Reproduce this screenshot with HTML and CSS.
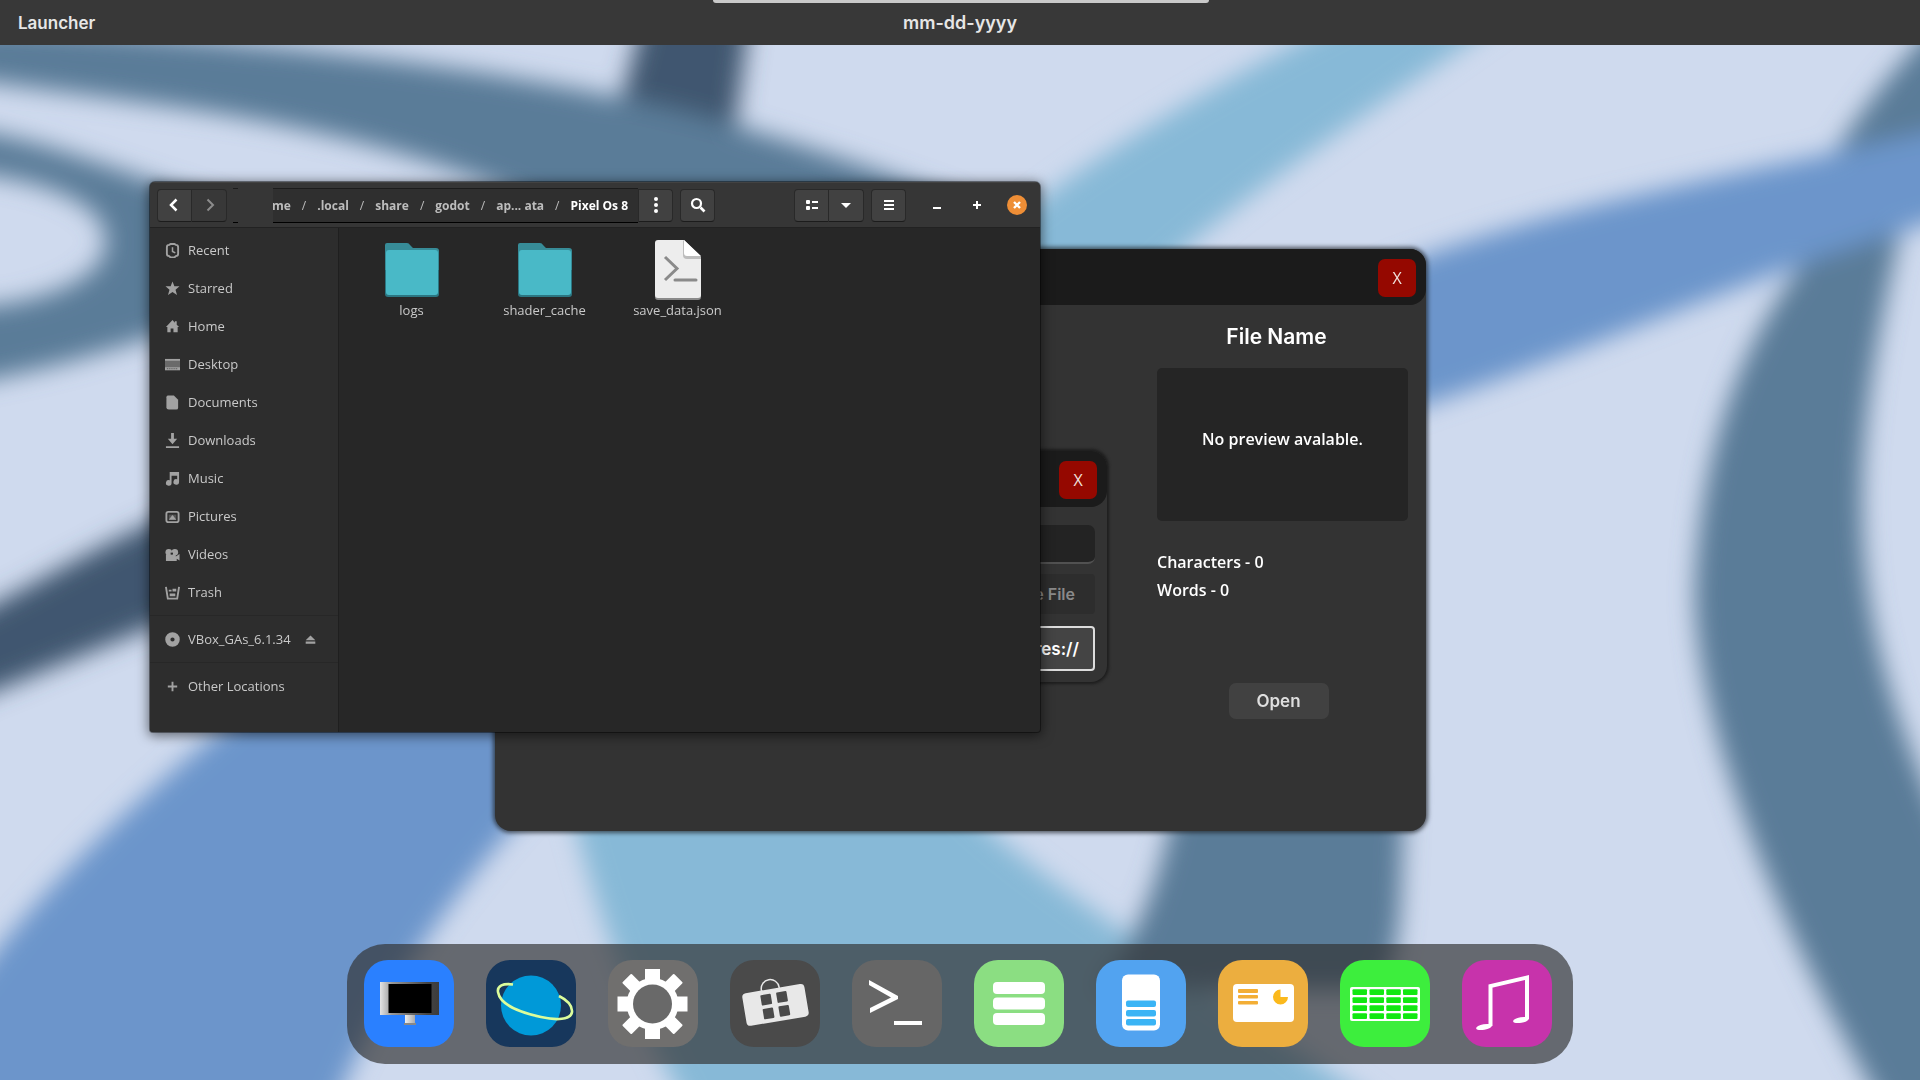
FILE: index.html
```html
<!DOCTYPE html>
<html lang="en">
<head>
    <meta charset="UTF-8">
    <title>Pixel Os 8</title>
    <link rel="stylesheet" href="styles.css">
</head>
<body>
<svg class="wallpaper" viewBox="0 0 1920 1080" preserveAspectRatio="xMidYMid slice" aria-hidden="true">
    <defs>
        <filter id="soft" x="-10%" y="-10%" width="120%" height="120%"><feGaussianBlur stdDeviation="12"/></filter>
    </defs>
    <rect width="1920" height="1080" fill="#cfdaee"/>
    <g filter="url(#soft)">
        <path fill="#3f566f" d="M648 0H752L732 150H608Z"/>
        <path fill="#3f566f" d="M-40 622C60 572 110 535 250 480V590C140 630 60 665 -40 705Z"/>
        <path fill="#5a7b98" d="M-40 25C200 35 420 60 560 86C720 115 820 150 960 200V320H700C600 220 480 160 240 117C150 102 60 92 -40 78Z"/>
        <path fill="#5a7b98" d="M-40 128C50 140 110 170 230 205V310C140 342 60 368 -40 385V308C40 305 106 280 106 241C106 205 50 180 -40 172Z"/>
        <path fill="#87b9d7" d="M1380 0H1530C1390 100 1260 180 1160 270L1000 420H850C900 280 1080 150 1380 0Z"/>
        <path fill="#87b9d7" d="M560 760H920C1000 860 1170 960 1400 1120H695C630 1010 590 900 560 760Z"/>
        <path fill="#5a7b98" d="M1960 0C1900 60 1860 110 1830 160L1960 140Z"/>
        <path fill="#5a7b98" d="M1908 200C1840 480 1840 620 1960 860V1120H1890C1780 930 1695 730 1695 590C1700 460 1735 330 1840 220Z"/>
        <path fill="#6c95cb" d="M1380 272C1550 205 1740 175 1960 125V215C1780 260 1600 350 1380 420Z"/>
        <path fill="#6c95cb" d="M270 690H640C490 840 380 980 330 1120H-40V1000C30 900 120 810 270 690Z"/>
        <path fill="#5a7b98" d="M1180 780H1408C1396 870 1410 940 1380 990H1095C1145 930 1162 870 1180 780Z"/>
    </g>
</svg>

<header class="topbar">
    <span class="launcher">Launcher</span>
    <span class="date">mm-dd-yyyy</span>
    <span class="handle"></span>
</header>

<main class="desktop">
    <!-- file picker app -->
    <section class="win app">
        <div class="win-title"><button class="win-close">X</button></div>
        <div class="app-body">
            <aside class="details">
                <h2>File Name</h2>
                <div class="preview">No preview avalable.</div>
                <p>Characters - 0</p>
                <p>Words - 0</p>
                <div class="details-foot"><button class="open">Open</button></div>
            </aside>
        </div>
    </section>

    <!-- create dialog -->
    <section class="win dialog">
        <div class="win-title"><button class="win-close">X</button></div>
        <div class="dialog-body">
            <input class="dialog-input" type="text" aria-label="File name">
            <button class="dialog-create" disabled>Create File</button>
            <button class="dialog-root">res://</button>
        </div>
    </section>

    <!-- file manager -->
    <section class="files">
        <div class="files-head">
            <div class="group">
                <button aria-label="Back"><svg width="16" height="16" viewBox="0 0 16 16"><path d="M9.500 2.500L4 8l5.500 5.500" fill="none" stroke="#fff" stroke-width="2.500"/></svg></button>
                <button class="off" aria-label="Forward"><svg width="16" height="16" viewBox="0 0 16 16"><path d="M6.500 2.500L12 8l-5.500 5.500" fill="none" stroke="#8c8c8c" stroke-width="2"/></svg></button>
            </div>
            <div class="path-stub"></div>
            <nav class="path">
                <a href="#">Home</a><i>/</i><a href="#">.local</a><i>/</i><a href="#">share</a><i>/</i><a href="#">godot</a><i>/</i><a href="#">ap... ata</a><i>/</i><a class="current" href="#">Pixel Os 8</a>
            </nav>
            <button class="path-menu" aria-label="Path menu"><svg width="16" height="18" viewBox="0 0 16 18" fill="#fff"><circle cx="8" cy="3" r="2"/><circle cx="8" cy="9" r="2"/><circle cx="8" cy="15" r="2"/></svg></button>
            <button class="search" aria-label="Search"><svg width="16" height="16" viewBox="0 0 16 16" fill="none" stroke="#fff"><circle cx="6.500" cy="6.500" r="4.500" stroke-width="2.200"/><path d="M10.500 10.500L14.500 14.500" stroke-width="2.600"/></svg></button>
            <div class="group view">
                <button aria-label="List view"><svg width="16" height="16" viewBox="0 0 16 16" fill="#fff"><rect x="2" y="3" width="4" height="4" rx="1"/><rect x="2" y="9" width="4" height="4" rx="1"/><path d="M8 4h6v2H8zM8 10h6v2H8z"/></svg></button>
                <button aria-label="View options"><svg width="16" height="16" viewBox="0 0 16 16" fill="#fff"><path d="M3 6h10L8 11z"/></svg></button>
            </div>
            <button aria-label="Menu"><svg width="16" height="16" viewBox="0 0 16 16" fill="#fff"><path d="M3 3h10v2H3zM3 7h10v2H3zM3 11h10v2H3z"/></svg></button>
            <div class="win-controls">
                <button aria-label="Minimize"><svg width="20" height="20" viewBox="0 0 20 20" fill="#fff"><path d="M6 12h8v2H6z"/></svg></button>
                <button aria-label="Maximize"><svg width="20" height="20" viewBox="0 0 20 20" fill="#fff"><path d="M9 6h2v3h3v2h-3v3H9v-3H6V9h3z"/></svg></button>
                <button aria-label="Close"><svg width="20" height="20" viewBox="0 0 20 20"><circle cx="10" cy="10" r="10" fill="#ee8e36"/><path d="M7 7l6 6M13 7l-6 6" stroke="#fff" stroke-width="2.400"/></svg></button>
            </div>
        </div>
        <div class="files-main">
            <nav class="sidebar">
                <a href="#"><svg viewBox="0 0 16 16"><path d="M4.500 2L6 1h4l1.500 1Q14 2 14 4.500v7Q14 14 11.500 14L10 15.500H6L4.500 14Q2 14 2 11.500v-7Q2 2 4.500 2z" fill="none" stroke="#a2a2a2" stroke-width="2"/><path d="M8 4.500V9l3 1.500" fill="none" stroke="#a2a2a2" stroke-width="1.600"/></svg>Recent</a>
                <a href="#"><svg viewBox="0 0 16 16"><path d="M8 .5l2 5.200h5.500L11.200 9.200l1.600 5.800L8 11.700 3.200 15l1.600-5.800L.5 5.700H6z"/></svg>Starred</a>
                <a href="#"><svg viewBox="0 0 16 16"><path d="M8 1L1 8.500h1.500V14H6v-4h3v4h4.500V8.500H15L12.500 6V2.500h-2V4z"/></svg>Home</a>
                <a href="#"><svg viewBox="0 0 16 16"><path d="M0 2h16v12H0z" fill="#6a6a6a"/><path d="M0 2h16v2H0zM0 11h16v3H0z"/><path d="M2 12.500h12" stroke="#444" stroke-width="1" stroke-dasharray="1 1"/></svg>Desktop</a>
                <a href="#"><svg viewBox="0 0 16 16"><path d="M3 .5h6.500L14 5v8.500Q14 15.500 12 15.500H4Q1.500 15.500 1.500 13V2.500Q1.500.5 3 .5z"/></svg>Documents</a>
                <a href="#"><svg viewBox="0 0 16 16"><path d="M6.500 0h3v6H13l-5 6-5-6h3.500zM1 14h14v2H1z"/></svg>Downloads</a>
                <a href="#"><svg viewBox="0 0 16 16"><path d="M5 1h10v10.500a3 3 0 1 1-2-2.700V5H7v7.500a3 3 0 1 1-2-2.700z"/></svg>Music</a>
                <a href="#"><svg viewBox="0 0 16 16"><rect x="1.500" y="3" width="13" height="11" rx="2" fill="none" stroke="#a2a2a2" stroke-width="2"/><path d="M4 6h8v5.500H4z" fill="#555"/><path d="M4 11.500L8 6.500l4 5z"/></svg>Pictures</a>
                <a href="#"><svg viewBox="0 0 16 16"><circle cx="4" cy="5.500" r="3.500"/><circle cx="10.500" cy="5.500" r="3.500"/><path d="M1 8h10.500v2l4-2.500v7l-3-2V15H1z"/><path d="M6 6h2.500v2H6z" fill="#2d2d2d"/></svg>Videos</a>
                <a href="#"><svg viewBox="0 0 16 16"><path d="M1 2l2 12.500h10L15 2" fill="none" stroke="#a2a2a2" stroke-width="2"/><path d="M4 5h3v2H4zM8 4h4v3H8zM5 9h6v3H5z"/></svg>Trash</a>
                <hr>
                <a href="#"><svg viewBox="0 0 16 16"><circle cx="8" cy="8" r="5" fill="none" stroke="#a2a2a2" stroke-width="5.500"/></svg>VBox_GAs_6.1.34<svg class="eject" viewBox="0 0 16 16"><path d="M8 2l7 7H1zM1 11h14v3H1z"/></svg></a>
                <hr>
                <a href="#"><svg viewBox="0 0 16 16"><path d="M7 3h2v4h4v2H9v4H7V9H3V7h4z"/></svg>Other Locations</a>
            </nav>
            <div class="file-grid">
                <a class="file" href="#">
                    <svg width="54" height="60" viewBox="0 0 54 60"><path d="M0 5q0-2 2-2h20q2 0 3 2l3 3h23q3 0 3 3v20H0z" fill="#378c98"/><path d="M0 30h54v24q0 3-3 3H3q-3 0-3-3z" fill="#2b7682"/><rect x="1" y="10" width="52" height="45" rx="3" fill="#49b9c7"/></svg>
                    <span>logs</span>
                </a>
                <a class="file" href="#">
                    <svg width="54" height="60" viewBox="0 0 54 60"><path d="M0 5q0-2 2-2h20q2 0 3 2l3 3h23q3 0 3 3v20H0z" fill="#378c98"/><path d="M0 30h54v24q0 3-3 3H3q-3 0-3-3z" fill="#2b7682"/><rect x="1" y="10" width="52" height="45" rx="3" fill="#49b9c7"/></svg>
                    <span>shader_cache</span>
                </a>
                <a class="file" href="#">
                    <svg width="46" height="60" viewBox="0 0 46 60"><path d="M0 30h46v27q0 3-3 3H3q-3 0-3-3z" fill="#8a8a8a"/><path d="M3 0h26l17 17v38q0 3-3 3H3q-3 0-3-3V3q0-3 3-3z" fill="#ededed"/><path d="M28 0v15q0 4 4 4h14v-2z" fill="#bdbdbd"/><path d="M29 0v13q0 3 3 3h14z" fill="#fff"/><path d="M10 17l12 11.500L10 40" fill="none" stroke="#8a8a8a" stroke-width="3"/><path d="M20 40h21" stroke="#8a8a8a" stroke-width="3" stroke-linecap="round"/></svg>
                    <span>save_data.json</span>
                </a>
            </div>
        </div>
    </section>

    <nav class="dock">
        <button class="tile c-finder" aria-label="Computer">
            <svg viewBox="0 0 90 88">
                <defs>
                    <linearGradient id="frame"><stop offset="0" stop-color="#e4e4e4"/><stop offset=".2" stop-color="#999"/><stop offset=".8" stop-color="#444"/><stop offset="1" stop-color="#3c3c3c"/></linearGradient>
                    <linearGradient id="stand"><stop offset="0" stop-color="#eee"/><stop offset="1" stop-color="#aaa"/></linearGradient>
                </defs>
                <rect x="16" y="22" width="59" height="33" fill="url(#frame)"/>
                <rect x="24.500" y="24" width="43" height="29"/>
                <rect x="41" y="55" width="10" height="8" fill="url(#stand)"/><rect x="40" y="63" width="12" height="2" fill="#888"/>
            </svg>
        </button>
        <button class="tile c-web" aria-label="Browser">
            <svg viewBox="0 0 90 88"><circle cx="45" cy="45.500" r="30" fill="#0099d8"/><path d="M27 24.500C17 23 11 26 12 32C14 45 33 52 55 57C70 60.500 85 60 86 52C86.500 46 81 40 73 36" fill="none" stroke="#dcfd9b" stroke-width="2.600"/></svg>
        </button>
        <button class="tile c-settings" aria-label="Settings">
            <svg viewBox="0 0 90 88"><g fill="#fff"><rect x="37" y="9" width="15" height="70"/><rect x="9.500" y="36.500" width="70" height="15"/><rect x="38" y="7.500" width="13" height="73" rx="1" transform="rotate(45 44.500 44)"/><rect x="38" y="7.500" width="13" height="73" rx="1" transform="rotate(-45 44.500 44)"/><circle cx="44.500" cy="44" r="26"/></g><circle cx="44.500" cy="44" r="19.500" fill="#696969"/></svg>
        </button>
        <button class="tile c-store" aria-label="Store">
            <svg viewBox="0 0 90 88"><g transform="rotate(-9.500 45 45)"><path d="M35 29v-1a9 9 0 0 1 18 0v1" fill="none" stroke="#e8e8e8" stroke-width="1.500" transform="translate(-1 0)"/><rect x="14" y="28.500" width="63" height="33" rx="4" fill="#e8e8e8"/><g fill="#4a4a4a"><rect x="32" y="33" width="10.500" height="10.500" rx="1"/><rect x="48" y="33" width="10.500" height="10.500" rx="1"/><rect x="32" y="47" width="10.500" height="10.500" rx="1"/><rect x="48" y="47" width="10.500" height="10.500" rx="1"/></g></g></svg>
        </button>
        <button class="tile c-term" aria-label="Terminal">
            <svg viewBox="0 0 90 88" fill="#fff"><path d="M17 20L46 36v3L18 53v-5L39 37.500L17 25z"/><rect x="42" y="61" width="28" height="4"/></svg>
        </button>
        <button class="tile c-notes" aria-label="Notes">
            <svg viewBox="0 0 90 88" fill="#fff"><rect x="19" y="22" width="52" height="12" rx="4"/><rect x="19" y="37.500" width="52" height="12" rx="4"/><rect x="19" y="53" width="52" height="12" rx="4"/></svg>
        </button>
        <button class="tile c-docs" aria-label="Documents">
            <svg viewBox="0 0 90 88"><rect x="26" y="14.500" width="38" height="56" rx="6" fill="#fff"/><g fill="#3ab4f5"><rect x="30" y="40.500" width="30" height="6.500" rx="2"/><rect x="30" y="50" width="30" height="6.500" rx="2"/><rect x="30" y="59" width="30" height="6.500" rx="2"/></g></svg>
        </button>
        <button class="tile c-slides" aria-label="Slides">
            <svg viewBox="0 0 90 88"><rect x="15" y="24" width="61" height="38" rx="4" fill="#fff"/><g fill="#f3ae35"><rect x="20" y="29" width="20" height="4" rx="1"/><rect x="20" y="35" width="20" height="3.500" rx="1"/><rect x="20" y="41" width="20" height="3.500" rx="1"/></g><path d="M62.500 37V29.500a7.500 7.500 0 1 0 7.500 7.500z" fill="#fbb91c"/></svg>
        </button>
        <button class="tile c-sheets" aria-label="Sheets">
            <svg viewBox="0 0 90 88">
                <defs><g id="cells"><rect x="12.500" width="14.500" height="5.800" rx="1"/><rect x="29.500" width="14.500" height="5.800" rx="1"/><rect x="46.300" width="14.500" height="5.800" rx="1"/><rect x="63" width="14.500" height="5.800" rx="1"/></g></defs>
                <rect x="10" y="27" width="70" height="34" rx="2" fill="#fff"/>
                <g fill="#12e812"><use href="#cells" y="29.300"/><use href="#cells" y="37.300"/><use href="#cells" y="45.300"/><use href="#cells" y="53.300"/></g>
            </svg>
        </button>
        <button class="tile c-music" aria-label="Music">
            <svg viewBox="0 0 90 88"><path d="M28.500 66V26L65 17.500V59" fill="none" stroke="#fff" stroke-width="4"/><g fill="#fff"><ellipse cx="22" cy="67" rx="8" ry="2.800" transform="rotate(-10 22 67)"/><ellipse cx="59" cy="60" rx="8" ry="2.800" transform="rotate(-10 59 60)"/></g></svg>
        </button>
    </nav>
</main>
</body>
</html>
```
FILE: styles.css
```css
*{
    margin: 0;
    padding: 0;
    box-sizing: border-box;
}
body{
    height: 100vh;
    display: flex;
    flex-direction: column;
    overflow: hidden;
    font-family: "Open Sans", "Noto Sans", sans-serif;
    color: #fff;
}
button, input{
    font: inherit;
    color: inherit;
    border: 0;
}
a{
    color: inherit;
    text-decoration: none;
}
.wallpaper{
    position: fixed;
    inset: 0;
    width: 100%;
    height: 100%;
    z-index: -1;
}

/* top bar */
.topbar{
    position: relative;
    height: 45px;
    display: grid;
    grid-template-columns: 1fr auto 1fr;
    align-items: center;
    padding: 0 18px;
    background: #383838;
    color: #e6e6e6;
    font: 600 17px Inter, sans-serif;
}
.date{
    font-size: 18px;
}
.handle{
    position: absolute;
    top: 0;
    left: 50%;
    width: 496px;
    height: 3px;
    margin-left: -247px;
    background: #c9c9c9;
    border-radius: 0 0 4px 4px;
}

.desktop{
    position: relative;
    flex: 1;
    display: flex;
    flex-direction: column;
    justify-content: flex-end;
    align-items: center;
    padding-bottom: 16px;
}

/* pixel os windows */
.win{
    position: absolute;
    background: #333;
    border-radius: 16px;
    box-shadow: 0 0 4px 2px rgba(30, 34, 40, .7);
}
.win-title{
    display: flex;
    justify-content: flex-end;
    padding: 10px 10px 8px;
    background: #1b1b1b;
    border-radius: 16px;
}
.win-close{
    width: 38px;
    height: 38px;
    background: #950800;
    border-radius: 7px;
    color: #f0e2dc;
    font-size: 16px;
}
.app{
    left: 495px;
    top: 204px;
    width: 931px;
    height: 582px;
}
.app-body{
    display: flex;
    justify-content: flex-end;
    padding: 18px 18px 0;
}
.details{
    width: 251px;
    font-size: 16px;
    font-weight: 600;
    line-height: 28px;
}
.details h2{
    padding-right: 12px;
    margin-bottom: 17px;
    text-align: center;
    font: 600 21px/28px Inter, sans-serif;
}
.preview{
    display: flex;
    justify-content: center;
    align-items: center;
    height: 153px;
    padding-bottom: 12px;
    margin-bottom: 27px;
    background: #252525;
    border-radius: 5px;
}
.details-foot{
    padding: 79px 8px 0 0;
    text-align: center;
}
.open{
    width: 100px;
    height: 36px;
    background: #414141;
    border-radius: 7px;
    color: #dedede;
    font: 600 17px Inter, sans-serif;
}
.dialog{
    left: 761px;
    top: 406px;
    width: 346px;
    height: 231px;
    box-shadow: 0 0 3px 2px #1d1d1d;
}
.dialog-body{
    display: flex;
    flex-direction: column;
    padding: 18px 12px;
    font: 600 16px Inter, sans-serif;
}
.dialog-input{
    height: 39px;
    padding: 0 10px;
    background: #232323;
    border-bottom: 2px solid #515151;
    border-radius: 7px;
}
.dialog-create, .dialog-root{
    text-align: right;
    border-radius: 4px;
}
.dialog-create{
    height: 40px;
    margin: 10px 0 12px;
    padding-right: 20px;
    background: #2d2d2d;
    color: #8a8a8a;
}
.dialog-root{
    height: 45px;
    padding-right: 14px;
    background: #444;
    border: 2px solid #dcdcdc;
    font-size: 17px;
}

/* file manager */
.files{
    position: absolute;
    left: 150px;
    top: 137px;
    width: 890px;
    height: 550px;
    display: flex;
    flex-direction: column;
    overflow: hidden;
    background: #272727;
    border-radius: 5px 5px 3px 3px;
    box-shadow: 0 2px 12px 2px rgba(0, 0, 0, .5), 0 0 0 1px rgba(0, 0, 0, .4);
}
.files-head{
    display: flex;
    align-items: center;
    height: 46px;
    padding: 0 13px 0 7px;
    background: #363636;
    border-top: 1px solid #424242;
    border-bottom: 1px solid #222;
}
.files-head button{
    width: 35px;
    height: 33px;
    display: flex;
    justify-content: center;
    align-items: center;
    background: #414141;
    border: 1px solid #292929;
    border-bottom-color: #1c1c1c;
    border-radius: 4px;
}
.group{
    display: flex;
}
.group button:first-child{
    border-radius: 4px 0 0 4px;
}
.group button:last-child{
    border-left: 0;
    border-radius: 0 4px 4px 0;
}
.files-head .off{
    background: #383838;
}
.path-stub{
    width: 5px;
    height: 35px;
    margin: 0 35px 0 6px;
    border-top: 1px solid #1c1c1c;
    border-bottom: 1px solid #000;
}
.path{
    width: 365px;
    height: 35px;
    display: flex;
    justify-content: flex-end;
    align-items: center;
    gap: 11px;
    padding-right: 10px;
    overflow: hidden;
    background: #2f2f2f;
    border-top: 1px solid #1c1c1c;
    border-bottom: 1px solid #000;
    color: #bdbdbd;
    font-size: 12px;
    font-weight: 700;
    white-space: nowrap;
}
.path i{
    font-style: normal;
    font-weight: 400;
}
.path .current{
    color: #fff;
}
.files-head .path-menu{
    border-radius: 0 4px 4px 0;
}
.search{
    margin-left: 7px;
}
.view{
    margin-left: auto;
    margin-right: 7px;
}
.win-controls{
    display: flex;
    gap: 20px;
    margin-left: 21px;
}
.files-head .win-controls button{
    width: 20px;
    background: none;
    border: 0;
}
.files-main{
    flex: 1;
    display: flex;
}
.sidebar{
    width: 189px;
    padding-top: 3px;
    background: #2d2d2d;
    border-right: 1px solid #1f1f1f;
    color: #c9c9c9;
    font-size: 13px;
}
.sidebar a{
    display: flex;
    align-items: center;
    gap: 8px;
    height: 38px;
    padding: 0 22px 0 15px;
    white-space: nowrap;
}
.sidebar svg{
    width: 15px;
    height: 15px;
    fill: #a2a2a2;
    flex: none;
}
.sidebar .eject{
    width: 11px;
    margin-left: auto;
}
.sidebar hr{
    height: 1px;
    margin: 4px 0;
    border: 0;
    background: #272727;
}
.file-grid{
    flex: 1;
    display: flex;
    align-items: flex-start;
    padding: 12px 6px;
    color: #c9c9c9;
    font-size: 13px;
}
.file{
    width: 133px;
    display: flex;
    flex-direction: column;
    align-items: center;
    line-height: 20px;
}

/* dock */
.dock{
    display: flex;
    gap: 32px;
    padding: 16px 21px 17px 17px;
    background: rgba(49, 49, 49, .67);
    border-radius: 38px;
}
.tile{
    width: 90px;
    height: 87px;
    border-radius: 24px;
    overflow: hidden;
}
.tile svg{
    display: block;
    width: 100%;
}
.c-finder{ background: #2a80ff; }
.c-web{ background: #17375c; }
.c-settings{ background: #706f6e; }
.c-store{ background: #4a4a4a; }
.c-term{ background: #666; }
.c-notes{ background: #8bde82; }
.c-docs{ background: #52a3f0; }
.c-slides{ background: #ecae3f; }
.c-sheets{ background: #3dee3d; }
.c-music{ background: #c733ab; }
```
